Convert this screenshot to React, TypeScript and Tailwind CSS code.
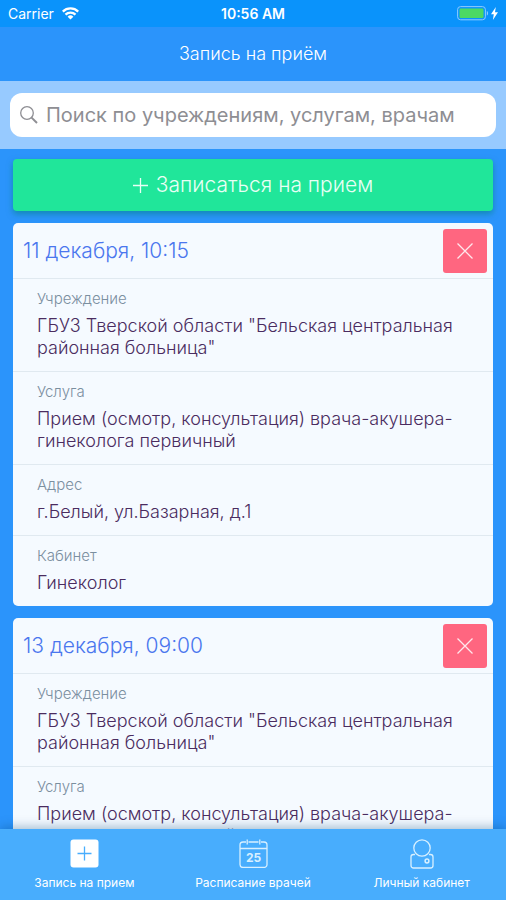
import React from "react";

type Field = { label: string; value: string };
type Appointment = { date: string; fields: Field[] };

const fields: Field[] = [
  { label: "Учреждение", value: 'ГБУЗ Тверской области "Бельская центральная районная больница"' },
  { label: "Услуга", value: "Прием (осмотр, консультация) врача-акушера-гинеколога первичный" },
  { label: "Адрес", value: "г.Белый, ул.Базарная, д.1" },
  { label: "Кабинет", value: "Гинеколог" },
];

const appointments: Appointment[] = [
  { date: "11 декабря, 10:15", fields },
  { date: "13 декабря, 09:00", fields },
];

function StatusBar() {
  return (
    <div className="grid h-[27px] shrink-0 grid-cols-3 items-center bg-[#0a93fb] px-2 text-[14px] leading-5 text-white">
      <div className="flex items-center gap-2">
        <span>Carrier</span>
        <svg width="17" height="13" viewBox="0 0 17 13" fill="none" stroke="currentColor" strokeWidth="2.3" aria-hidden="true">
          <path d="M0.8 4.6a11 11 0 0 1 15.4 0" />
          <path d="M3.5 7.6a7.1 7.1 0 0 1 10 0" />
          <path d="M8.5 12.6 5.6 9.7a4.1 4.1 0 0 1 5.8 0z" fill="currentColor" stroke="none" />
        </svg>
      </div>
      <div className="text-center font-semibold">10:56 AM</div>
      <div className="flex items-center justify-end gap-0.5">
        <svg width="32" height="15" viewBox="0 0 32 15" aria-hidden="true">
          <rect x="0.6" y="0.6" width="27.8" height="13.2" rx="3" fill="none" stroke="#8fcbff" strokeWidth="1" />
          <rect x="2.5" y="2.5" width="24" height="9.5" rx="1.2" fill="#4cd964" />
          <path d="M29.8 5c1.7.6 1.7 4 0 4.600z" fill="#8fcbff" />
        </svg>
        <svg width="7" height="13" viewBox="0 0 7 13" fill="currentColor" aria-hidden="true">
          <path d="M4.800 0 0 7.200h2.800L1.900 13 7 5.300H4z" />
        </svg>
      </div>
    </div>
  );
}

function AppointmentCard({ appointment }: { appointment: Appointment }) {
  return (
    <article className="rounded-[5px] bg-[#f5faff]">
      <header className="flex h-[55px] items-center justify-between pr-1.5 pl-2.5">
        <h2 className="text-[21px] leading-7 font-light text-[#4a76ee]">{appointment.date}</h2>
        <button
          type="button"
          aria-label="Отменить запись"
          className="flex size-11 items-center justify-center rounded-[3px] bg-[#ff6680] text-[#ffe8ec]"
        >
          <svg width="16" height="16" viewBox="0 0 16 16" fill="none" stroke="currentColor" strokeWidth="1.3" aria-hidden="true">
            <path d="M0.500 0.500 15.500 15.500M15.500 0.500 0.500 15.500" />
          </svg>
        </button>
      </header>
      <dl>
        {appointment.fields.map((field) => (
          <div key={field.label} className="border-t border-[#e0e9f0] px-6 pt-3 pb-3">
            <dt className="text-[15px] leading-4 font-light text-[#7b8f9f]">{field.label}</dt>
            <dd className="mt-2 text-[18px] leading-[22px] font-light text-[#4a2c60]">{field.value}</dd>
          </div>
        ))}
      </dl>
    </article>
  );
}

function NavLink({ label, children }: { label: string; children: React.ReactNode }) {
  return (
    <a href="#" className="flex flex-1 flex-col items-center gap-[7px] pt-2.5 text-[12px] leading-4 text-white">
      <span className="flex h-[29px] items-center justify-center">{children}</span>
      {label}
    </a>
  );
}

export default function App() {
  return (
    <div className="flex h-screen flex-col overflow-hidden bg-[#2b94fb] font-[Inter,'Liberation_Sans',sans-serif]">
      <StatusBar />
      <header className="flex h-[54px] shrink-0 items-center justify-center text-white">
        <h1 className="text-[18px] leading-6 font-light">Запись на приём</h1>
      </header>
      <div className="shrink-0 bg-[#97caff] px-2.5 py-3">
        <label className="flex h-11 items-center gap-2 rounded-xl bg-white px-2.5 text-[#8e8e93]">
          <svg width="18" height="18" viewBox="0 0 18 18" fill="none" stroke="currentColor" aria-hidden="true">
            <circle cx="7" cy="7" r="6.300" strokeWidth="1.300" />
            <path d="m11.600 11.600 5.400 5.400" strokeWidth="2" />
          </svg>
          <input
            type="search"
            aria-label="Поиск"
            placeholder="Поиск по учреждениям, услугам, врачам"
            className="min-w-0 flex-1 bg-transparent text-[20px] leading-6 outline-none placeholder:text-[#8e8e93]"
          />
        </label>
      </div>
      <main className="flex min-h-0 flex-1 flex-col gap-3 overflow-y-auto px-[13px] pt-2.5 [scrollbar-width:none]">
        <button
          type="button"
          className="flex h-[52px] shrink-0 items-center justify-center gap-2 rounded-[4px] bg-[#20e69a] text-[21px] leading-7 font-light text-[#e8fff5] shadow-[0_3px_6px_rgba(0,130,130,0.6)]"
        >
          <svg width="15" height="15" viewBox="0 0 15 15" fill="none" stroke="currentColor" strokeWidth="1.300" aria-hidden="true">
            <path d="M7.500 0v15M0 7.500h15" />
          </svg>
          Записаться на прием
        </button>
        {appointments.map((appointment) => (
          <AppointmentCard key={appointment.date} appointment={appointment} />
        ))}
      </main>
      <nav className="relative flex h-[71px] shrink-0 bg-[#48adfd] shadow-[0_-2px_10px_rgba(0,70,120,0.35)]">
        <NavLink label="Запись на прием">
          <svg width="29" height="29" viewBox="0 0 29 29" aria-hidden="true">
            <rect x="0.500" y="0.500" width="28" height="28" rx="3" fill="#ffffff" />
            <path d="M14.500 7.500v14M7.500 14.500h14" stroke="#48adfd" strokeWidth="1.300" />
          </svg>
        </NavLink>
        <NavLink label="Расписание врачей">
          <svg width="29" height="29" viewBox="0 0 29 29" fill="none" stroke="#d8f0ff" strokeWidth="1.300" aria-hidden="true">
            <path d="M7 3H4a3 3 0 0 0-3 3v19.500a3 3 0 0 0 3 3h21a3 3 0 0 0 3-3V6a3 3 0 0 0-3-3h-3M9.500 3h10M1 9.500h27M8.200 0.500v5M20.800 0.500v5" />
            <text x="14.500" y="22.500" textAnchor="middle" fontSize="12" fontWeight="700" fill="#d8f0ff" stroke="none">25</text>
          </svg>
        </NavLink>
        <NavLink label="Личный кабинет">
          <svg width="24" height="30" viewBox="0 0 24 30" fill="none" stroke="#d8f0ff" strokeWidth="1.300" aria-hidden="true">
            <circle cx="12" cy="9" r="8.200" />
            <path d="M5 15.500H3.500a2.500 2.500 0 0 0-2.500 2.500v8.500A2.500 2.500 0 0 0 3.500 29h17a2.500 2.500 0 0 0 2.500-2.500V18a2.500 2.500 0 0 0-2.500-2.500H19" />
            <circle cx="17" cy="22" r="1.900" strokeWidth="1.500" />
          </svg>
        </NavLink>
      </nav>
    </div>
  );
}
